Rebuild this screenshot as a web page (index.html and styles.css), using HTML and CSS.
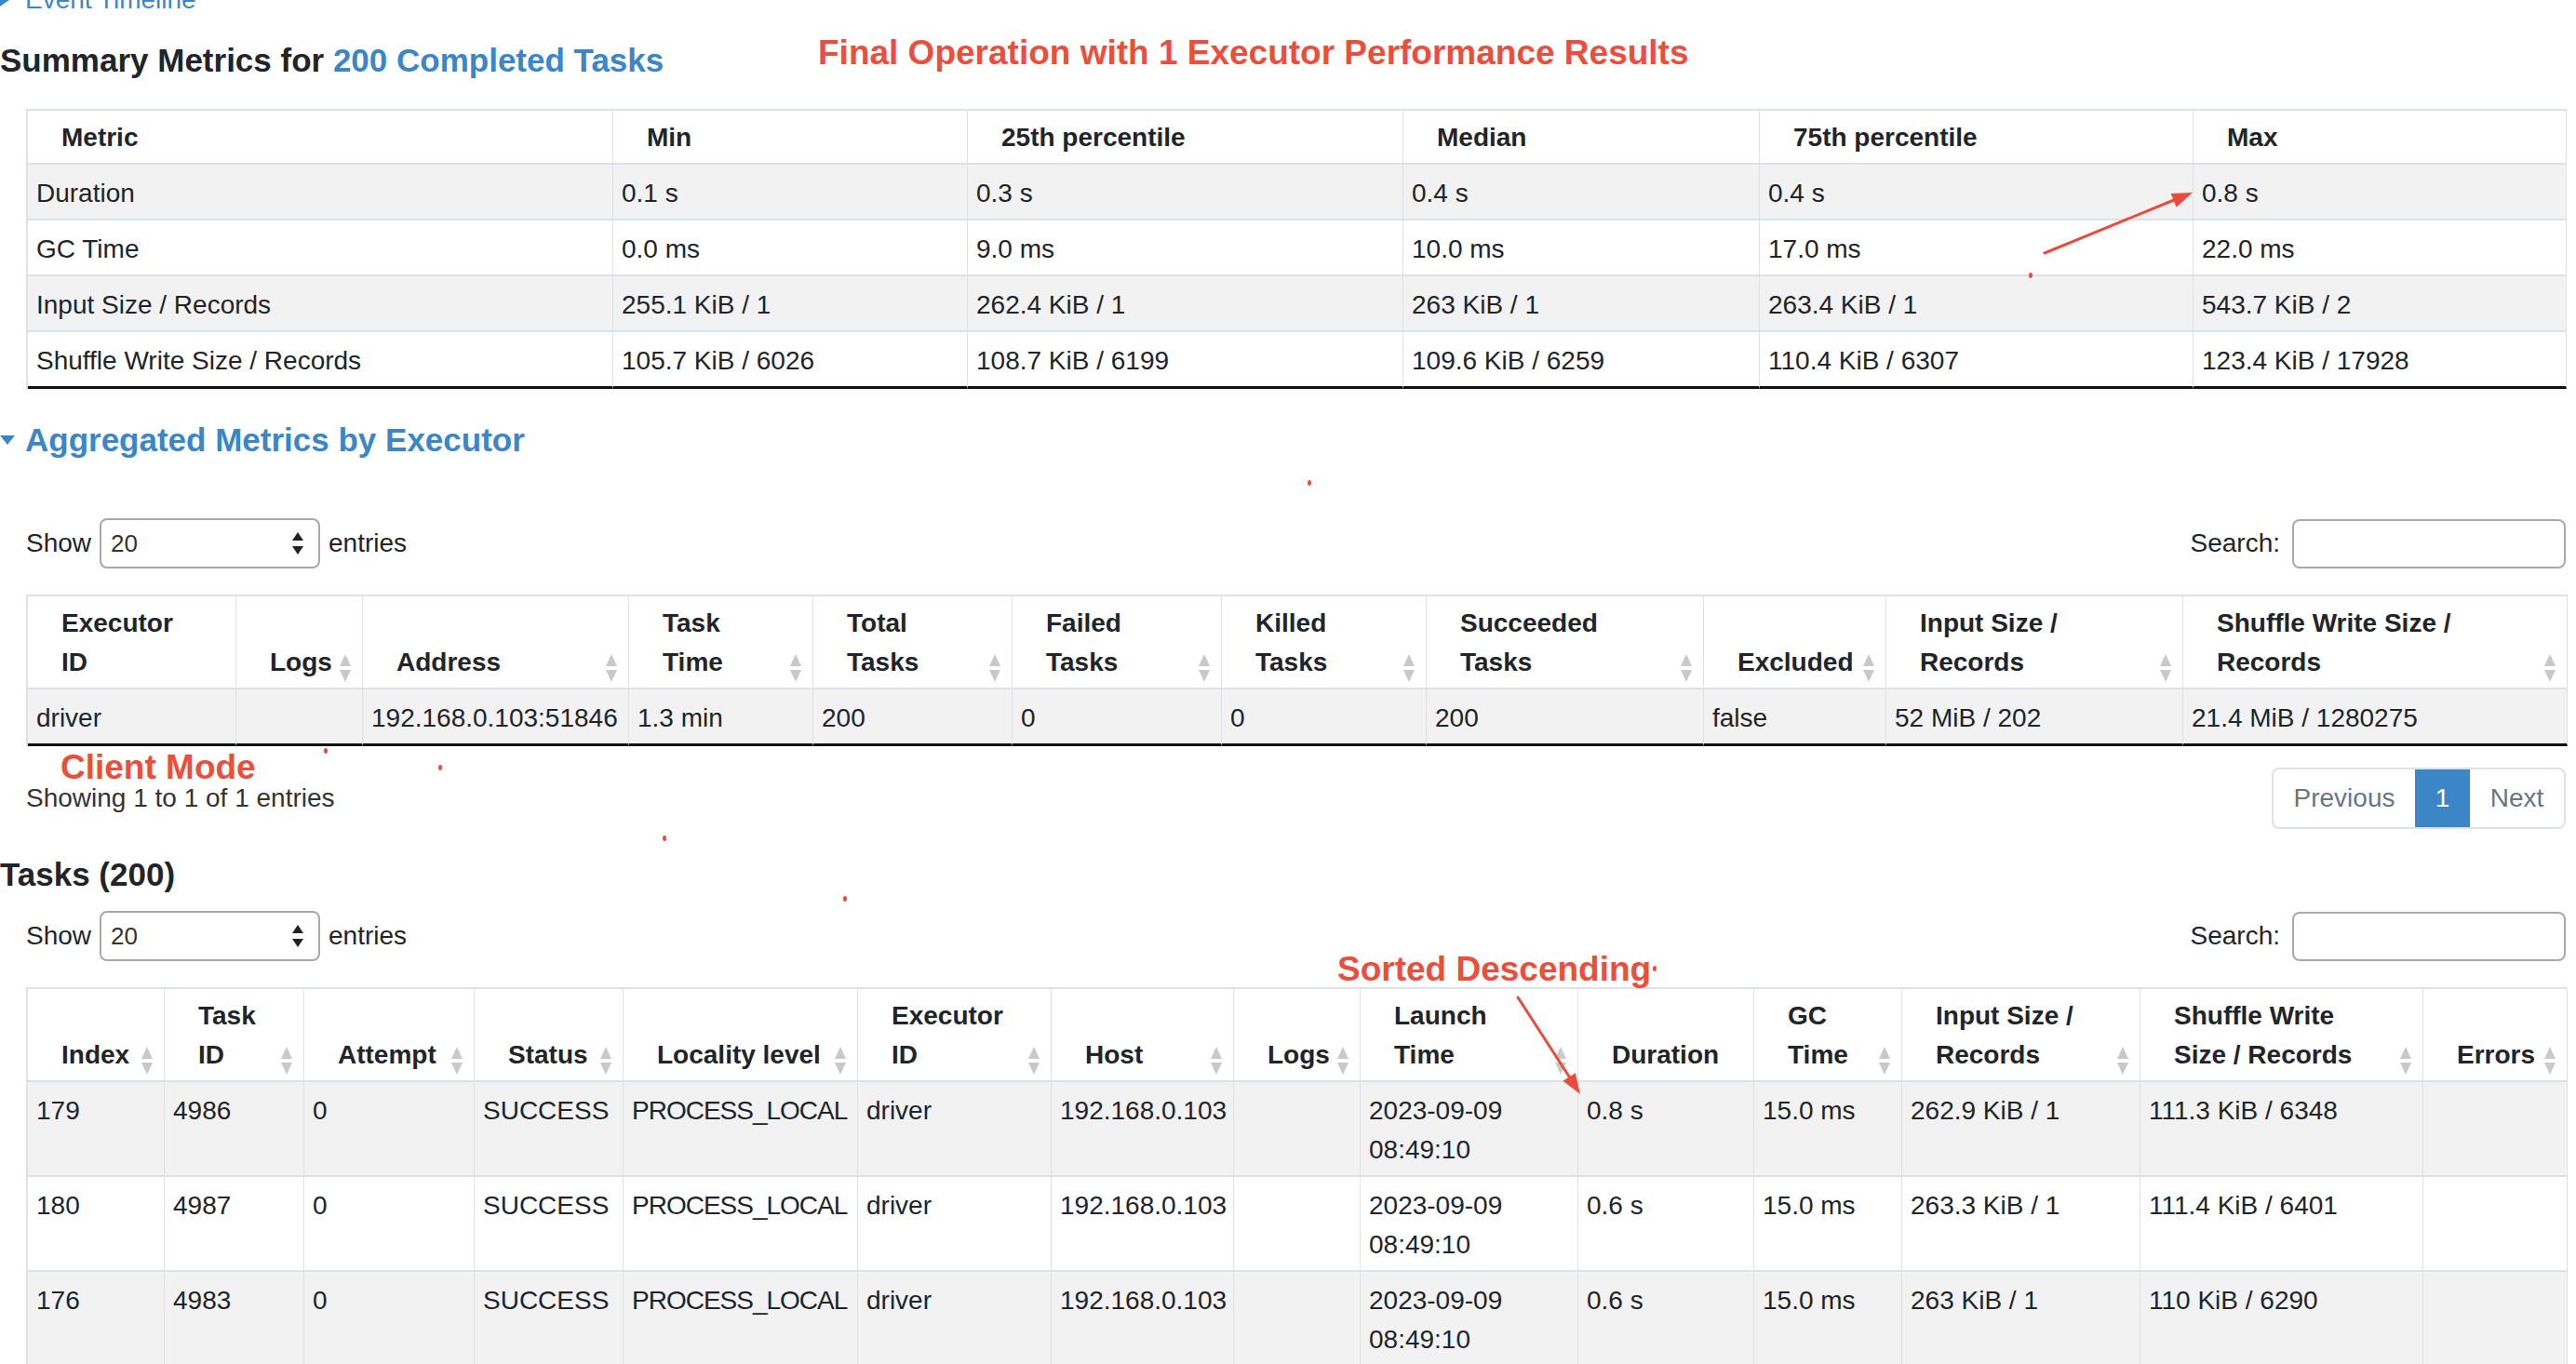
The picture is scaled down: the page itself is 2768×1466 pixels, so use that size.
FILE: index.html
```html
<!DOCTYPE html>
<html>
<head>
<meta charset="utf-8">
<title>Stage Details</title>
<link rel="stylesheet" href="styles.css">
</head>
<body>
<div class="page">
  <div class="event-timeline"><span class="tri-right"></span><span>Event Timeline</span></div>

  <h4 class="section-title title-summary">Summary Metrics for <span class="link">200 Completed Tasks</span></h4>

  <div class="table-wrap summary-wrap">
    <table class="tbl summary">
      <colgroup>
        <col class="s1"><col class="s2"><col class="s3"><col class="s4"><col class="s5"><col class="s6">
      </colgroup>
      <thead>
        <tr><th>Metric</th><th>Min</th><th>25th percentile</th><th>Median</th><th>75th percentile</th><th>Max</th></tr>
      </thead>
      <tbody>
        <tr><td>Duration</td><td>0.1 s</td><td>0.3 s</td><td>0.4 s</td><td>0.4 s</td><td>0.8 s</td></tr>
        <tr><td>GC Time</td><td>0.0 ms</td><td>9.0 ms</td><td>10.0 ms</td><td>17.0 ms</td><td>22.0 ms</td></tr>
        <tr><td>Input Size / Records</td><td>255.1 KiB / 1</td><td>262.4 KiB / 1</td><td>263 KiB / 1</td><td>263.4 KiB / 1</td><td>543.7 KiB / 2</td></tr>
        <tr><td>Shuffle Write Size / Records</td><td>105.7 KiB / 6026</td><td>108.7 KiB / 6199</td><td>109.6 KiB / 6259</td><td>110.4 KiB / 6307</td><td>123.4 KiB / 17928</td></tr>
      </tbody>
    </table>
  </div>

  <h4 class="section-title agg"><span class="tri-down"></span><span>Aggregated Metrics by Executor</span></h4>

  <div class="table-wrap exec-wrap">
    <div class="dt-top">
      <div class="len">Show <div class="select"><span>20</span><svg class="sel-arrows" width="14" height="26" viewBox="0 0 14 26"><polygon points="7,1 13,10 1,10" fill="#222"/><polygon points="1,16 13,16 7,25" fill="#222"/></svg></div> entries</div>
      <div class="search">Search: <div class="input"></div></div>
    </div>
    <table class="tbl exec">
      <colgroup>
        <col class="e1"><col class="e2"><col class="e3"><col class="e4"><col class="e5"><col class="e6"><col class="e7"><col class="e8"><col class="e9"><col class="e10"><col class="e11">
      </colgroup>
      <thead>
        <tr>
          <th>Executor<br>ID</th>
          <th>Logs<span class="sort"></span></th>
          <th>Address<span class="sort"></span></th>
          <th>Task<br>Time<span class="sort"></span></th>
          <th>Total<br>Tasks<span class="sort"></span></th>
          <th>Failed<br>Tasks<span class="sort"></span></th>
          <th>Killed<br>Tasks<span class="sort"></span></th>
          <th>Succeeded<br>Tasks<span class="sort"></span></th>
          <th>Excluded<span class="sort"></span></th>
          <th>Input Size /<br>Records<span class="sort"></span></th>
          <th>Shuffle Write Size /<br>Records<span class="sort"></span></th>
        </tr>
      </thead>
      <tbody>
        <tr><td>driver</td><td></td><td>192.168.0.103:51846</td><td>1.3 min</td><td>200</td><td>0</td><td>0</td><td>200</td><td>false</td><td>52 MiB / 202</td><td>21.4 MiB / 1280275</td></tr>
      </tbody>
    </table>
    <div class="dt-bottom">
      <div class="info">Showing 1 to 1 of 1 entries</div>
      <div class="paging"><span class="pg prev">Previous</span><span class="pg active">1</span><span class="pg next">Next</span></div>
    </div>
  </div>

  <h4 class="section-title tasks-title">Tasks (200)</h4>

  <div class="table-wrap tasks-wrap">
    <div class="dt-top">
      <div class="len">Show <div class="select"><span>20</span><svg class="sel-arrows" width="14" height="26" viewBox="0 0 14 26"><polygon points="7,1 13,10 1,10" fill="#222"/><polygon points="1,16 13,16 7,25" fill="#222"/></svg></div> entries</div>
      <div class="search">Search: <div class="input"></div></div>
    </div>
    <table class="tbl tasks">
      <colgroup>
        <col class="t1"><col class="t2"><col class="t3"><col class="t4"><col class="t5"><col class="t6"><col class="t7"><col class="t8"><col class="t9"><col class="t10"><col class="t11"><col class="t12"><col class="t13"><col class="t14">
      </colgroup>
      <thead>
        <tr>
          <th>Index<span class="sort"></span></th>
          <th>Task<br>ID<span class="sort"></span></th>
          <th>Attempt<span class="sort"></span></th>
          <th>Status<span class="sort"></span></th>
          <th>Locality level<span class="sort"></span></th>
          <th>Executor<br>ID<span class="sort"></span></th>
          <th>Host<span class="sort"></span></th>
          <th>Logs<span class="sort"></span></th>
          <th>Launch<br>Time<span class="sort"></span></th>
          <th>Duration</th>
          <th>GC<br>Time<span class="sort"></span></th>
          <th>Input Size /<br>Records<span class="sort"></span></th>
          <th>Shuffle Write<br>Size / Records<span class="sort"></span></th>
          <th>Errors<span class="sort"></span></th>
        </tr>
      </thead>
      <tbody>
        <tr><td>179</td><td>4986</td><td>0</td><td>SUCCESS</td><td class="loc">PROCESS_LOCAL</td><td>driver</td><td>192.168.0.103</td><td></td><td>2023-09-09 08:49:10</td><td>0.8 s</td><td>15.0 ms</td><td>262.9 KiB / 1</td><td>111.3 KiB / 6348</td><td></td></tr>
        <tr><td>180</td><td>4987</td><td>0</td><td>SUCCESS</td><td class="loc">PROCESS_LOCAL</td><td>driver</td><td>192.168.0.103</td><td></td><td>2023-09-09 08:49:10</td><td>0.6 s</td><td>15.0 ms</td><td>263.3 KiB / 1</td><td>111.4 KiB / 6401</td><td></td></tr>
        <tr><td>176</td><td>4983</td><td>0</td><td>SUCCESS</td><td class="loc">PROCESS_LOCAL</td><td>driver</td><td>192.168.0.103</td><td></td><td>2023-09-09 08:49:10</td><td>0.6 s</td><td>15.0 ms</td><td>263 KiB / 1</td><td>110 KiB / 6290</td><td></td></tr>
      </tbody>
    </table>
  </div>

  <span class="annot annot-final">Final Operation with 1 Executor Performance Results</span>
  <span class="annot annot-client">Client Mode</span>
  <span class="annot annot-sorted">Sorted Descending</span>

  <svg class="overlay" width="2768" height="1466" viewBox="0 0 2768 1466">
    <g stroke="#e94b3c" stroke-width="3" stroke-linecap="round">
      <line x1="2197" y1="272" x2="2336" y2="215"/>
      <line x1="1631" y1="1072" x2="1686" y2="1157"/>
    </g>
    <g fill="#e94b3c">
      <polygon points="2356,207 2338.6,222.7 2332.6,207.9"/>
      <polygon points="1698,1176 1692.8,1153.2 1679.4,1161.8"/>
      <ellipse cx="2182" cy="296" rx="2" ry="3"/>
      <ellipse cx="1407" cy="519" rx="2" ry="3"/>
      <ellipse cx="350" cy="807" rx="2" ry="3"/>
      <ellipse cx="473" cy="825" rx="2" ry="3"/>
      <ellipse cx="714" cy="901" rx="2" ry="3"/>
      <ellipse cx="908" cy="966" rx="2" ry="3"/>
      <ellipse cx="1778" cy="1041" rx="2" ry="3"/>
    </g>
  </svg>
</div>
</body>
</html>
```

FILE: styles.css
```css
html, body {
  margin: 0;
  padding: 0;
  overflow: hidden;
  background: #ffffff;
}

body {
  font-family: "Liberation Sans", Arial, Helvetica, sans-serif;
  font-size: 28px;
  line-height: 42px;
  color: #212529;
}

.page {
  position: relative;
  display: flow-root;
  width: 2768px;
}

.link {
  color: #3b86c6;
}

/* Event timeline (cut at top) */
.event-timeline {
  margin-top: -21px;
  height: 42px;
  display: flex;
  align-items: center;
  gap: 17px;
  color: #3b86c6;
}

.tri-right {
  width: 0;
  height: 0;
  border-left: 10px solid #3b86c6;
  border-top: 7px solid transparent;
  border-bottom: 7px solid transparent;
}

.tri-down {
  width: 0;
  height: 0;
  border-top: 10px solid #3b86c6;
  border-left: 8px solid transparent;
  border-right: 8px solid transparent;
}

.section-title {
  margin: 0;
  font-size: 35px;
  line-height: 42px;
  font-weight: 700;
  color: #212529;
}

.title-summary {
  margin-top: 23px;
}

.agg {
  margin-top: 34px;
  color: #3b86c6;
  display: flex;
  align-items: center;
  gap: 11px;
}

.tasks-title {
  margin-top: 28px;
}

.table-wrap {
  padding: 0 11px 0 28px;
}

.summary-wrap {
  margin-top: 31px;
}

.exec-wrap .dt-top {
  margin-top: 63px;
}

.tasks-wrap .dt-top {
  margin-top: 18px;
}

/* DataTables controls */
.dt-top {
  display: flex;
  justify-content: space-between;
  align-items: center;
  height: 54px;
  margin-bottom: 28px;
  color: #212529;
}

.len, .search {
  display: flex;
  align-items: center;
  gap: 9px;
}

.search {
  gap: 13px;
}

.select {
  display: flex;
  align-items: center;
  justify-content: space-between;
  box-sizing: border-box;
  width: 237px;
  height: 54px;
  border: 2px solid #a9a9a9;
  border-radius: 8px;
  padding: 0 15px 0 10px;
  font-size: 26px;
  color: #333;
}

.input {
  box-sizing: border-box;
  width: 294px;
  height: 53px;
  border: 2px solid #a9a9a9;
  border-radius: 8px;
}

.dt-bottom {
  display: flex;
  justify-content: space-between;
  align-items: center;
  margin-top: 23px;
}

.info {
  color: #333;
}

.paging {
  display: flex;
  box-sizing: border-box;
  height: 66px;
  border: 2px solid #dee2e6;
  border-radius: 8px;
  overflow: hidden;
}

.pg {
  display: flex;
  align-items: center;
  justify-content: center;
  color: #6c757d;
}

.prev {
  width: 152px;
}

.active {
  width: 59px;
  background: #3b86c6;
  color: #ffffff;
}

.next {
  width: 101px;
}

/* Tables */
.tbl {
  width: 100%;
  table-layout: fixed;
  border-collapse: separate;
  border-spacing: 0;
  border-top: 2px solid #dee2e6;
  border-left: 2px solid #dee2e6;
}

.tbl th,
.tbl td {
  border-right: 1px solid #dee2e6;
  border-bottom: 2px solid #dee2e6;
  text-align: left;
}

.tbl th {
  position: relative;
  font-weight: 700;
  vertical-align: bottom;
  padding: 8px 20px 6px 36px;
  white-space: nowrap;
}

.tbl td {
  vertical-align: top;
  padding: 10px 2px 6px 9px;
}

.tbl tbody tr:nth-child(odd) td {
  background: #f2f2f2;
}

.tbl tbody tr:last-child td {
  border-bottom: 3px solid #111111;
}

.tasks tbody tr:last-child td {
  border-bottom: 2px solid #dee2e6;
}

.tasks td {
  white-space: normal;
}

.tasks td.loc {
  letter-spacing: -1px;
}

/* Sort icons */
.sort {
  position: absolute;
  right: 12px;
  bottom: 6px;
  width: 12px;
  height: 30px;
}

.sort::before,
.sort::after {
  content: "";
  position: absolute;
  left: 0;
  width: 0;
  height: 0;
  border-left: 6px solid transparent;
  border-right: 6px solid transparent;
}

.sort::before {
  top: 0;
  border-bottom: 13px solid #c9c9c9;
}

.sort::after {
  bottom: 0;
  border-top: 13px solid #c9c9c9;
}

/* Column widths */
.summary .s1 { width: 629px; }
.summary .s2 { width: 381px; }
.summary .s3 { width: 468px; }
.summary .s4 { width: 383px; }
.summary .s5 { width: 466px; }
.summary .s6 { width: 401px; }

.exec .e1 { width: 224px; }
.exec .e2 { width: 136px; }
.exec .e3 { width: 286px; }
.exec .e4 { width: 198px; }
.exec .e5 { width: 214px; }
.exec .e6 { width: 225px; }
.exec .e7 { width: 220px; }
.exec .e8 { width: 298px; }
.exec .e9 { width: 196px; }
.exec .e10 { width: 319px; }
.exec .e11 { width: 413px; }

.tasks .t1 { width: 147px; }
.tasks .t2 { width: 150px; }
.tasks .t3 { width: 183px; }
.tasks .t4 { width: 160px; }
.tasks .t5 { width: 252px; }
.tasks .t6 { width: 208px; }
.tasks .t7 { width: 196px; }
.tasks .t8 { width: 136px; }
.tasks .t9 { width: 234px; }
.tasks .t10 { width: 189px; }
.tasks .t11 { width: 159px; }
.tasks .t12 { width: 256px; }
.tasks .t13 { width: 304px; }
.tasks .t14 { width: 155px; }

/* Annotations drawn over the page */
.annot {
  position: absolute;
  font-weight: 700;
  font-size: 37px;
  line-height: 42px;
  color: #ea4f3d;
  white-space: nowrap;
}

.annot-final {
  left: 879px;
  top: 36px;
}

.annot-client {
  left: 65px;
  top: 804px;
}

.annot-sorted {
  left: 1437px;
  top: 1021px;
}

.overlay {
  position: absolute;
  left: 0;
  top: 0;
  pointer-events: none;
}
```
